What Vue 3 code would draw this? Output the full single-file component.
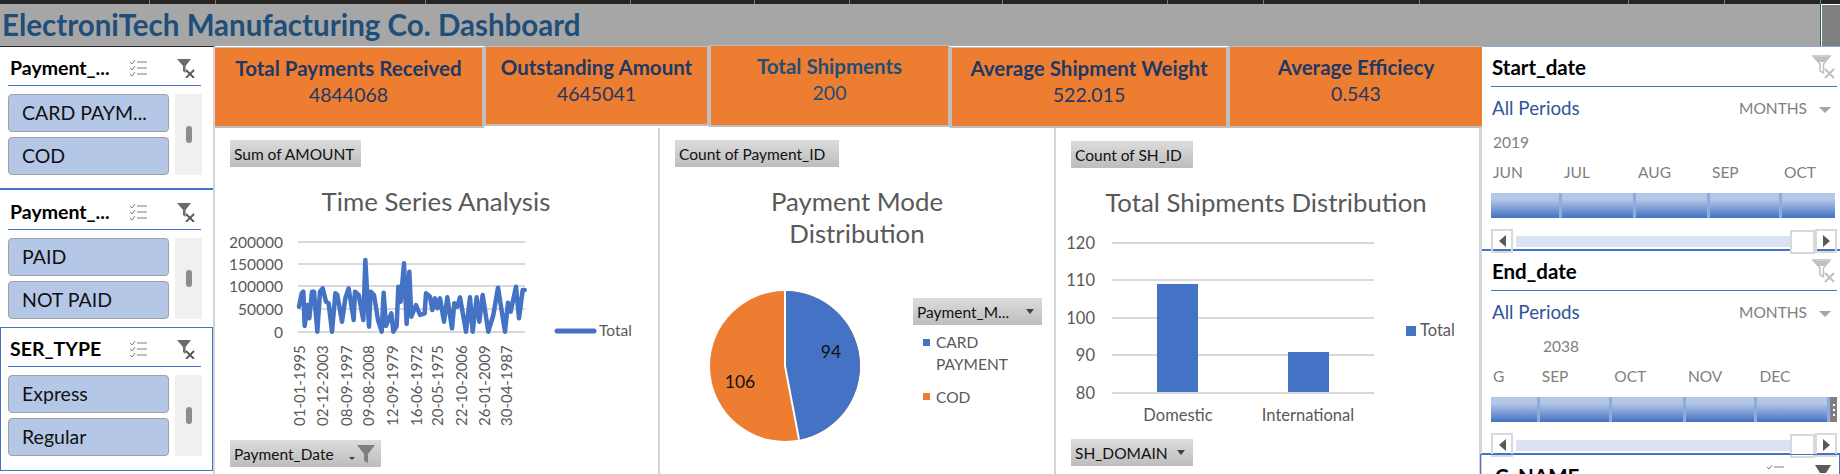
<template>
  <div class="sheet">
    <div class="ruler">
      <span v-for="x in rulerTicks" :key="x" class="tick" :style="{ left: x + 'px' }"></span>
    </div>
    <div class="banner">
      <h1>ElectroniTech Manufacturing Co. Dashboard</h1>
      <div class="selected-cell"></div>
    </div>

    <div class="main">
      <!-- left slicers -->
      <aside class="left-col">
        <section v-for="s in slicers" :key="s.cls" class="slicer" :class="s.cls">
          <header class="slicer-head">
            <span class="slicer-title">{{ s.title }}</span>
            <svg class="ico-list" viewBox="0 0 19 19">
              <g fill="none" stroke="#7f7f7f" stroke-width="1">
                <path d="M1 3l2 2 3-4M1 9l2 2 3-4M1 15l2 2 3-4" />
                <path d="M8 3h10M8 9h10M8 15h10" />
              </g>
            </svg>
            <svg class="ico-clear" viewBox="0 0 20 20">
              <path d="M1 1h14L9.5 8v7L7 13V8z" fill="#6b6b6b" />
              <path d="M10 12l8 8M18 12l-8 8" stroke="#555" stroke-width="1.8" fill="none" />
            </svg>
          </header>
          <div class="slicer-body">
            <div class="items">
              <div v-for="item in s.items" :key="item" class="item">{{ item }}</div>
            </div>
            <div class="track"><span class="thumb"></span></div>
          </div>
        </section>
      </aside>

      <div class="center-col">
        <div class="kpis">
          <div v-for="k in kpis" :key="k.label" class="kpi" :class="k.cls">
            <div class="kpi-label">{{ k.label }}</div>
            <div class="kpi-value">{{ k.value }}</div>
          </div>
        </div>

        <div class="charts">
          <!-- line chart -->
          <div class="panel panel-line">
            <div class="field-btn btn-amount">Sum of AMOUNT</div>
            <h2 class="chart-title">Time Series Analysis</h2>
            <svg class="plot plot-line" viewBox="230 232 425 200">
              <line v-for="y in [242, 264, 286, 309, 332]" :key="y" x1="298" x2="525" :y1="y" :y2="y" class="grid" />
              <text v-for="t in lineTicks" :key="t.label" x="283" :y="t.y + 5.5" text-anchor="end" class="axis">{{ t.label }}</text>
              <polyline :points="linePoints" class="series" />
              <text
                v-for="d in lineDates"
                :key="d.label"
                :transform="`translate(${d.x} 426) rotate(-90)`"
                class="axis axis-date"
              >{{ d.label }}</text>
              <line x1="557" x2="594" y1="331" y2="331" class="legend-line" />
              <text x="599" y="336" class="axis">Total</text>
            </svg>
            <div class="field-btn btn-date">
              Payment_Date
              <span class="mini-arrow"></span>
              <svg class="ico-funnel" viewBox="0 0 20 20"><path d="M1 1h18l-7 9v9l-4-2v-7z" fill="#7f7f7f" /></svg>
            </div>
          </div>

          <!-- pie chart -->
          <div class="panel panel-pie">
            <div class="field-btn btn-count">Count of Payment_ID</div>
            <h2 class="chart-title">Payment Mode<br />Distribution</h2>
            <svg class="plot plot-pie" viewBox="675 250 378 200">
              <circle cx="785" cy="366" r="75" fill="#ed7d31" />
              <path :d="blueSlice" fill="#4472c4" />
              <path :d="sliceEdges" stroke="#fff" stroke-width="2" fill="none" />
              <text x="831" y="358" text-anchor="middle" class="pie-label">94</text>
              <text x="740" y="388" text-anchor="middle" class="pie-label">106</text>
              <rect x="923" y="339" width="7" height="7" fill="#4472c4" />
              <text x="936" y="348" class="axis">CARD</text>
              <text x="936" y="370" class="axis">PAYMENT</text>
              <rect x="923" y="393" width="7" height="7" fill="#ed7d31" />
              <text x="936" y="403" class="axis">COD</text>
            </svg>
            <div class="field-btn btn-mode">Payment_M... <span class="arrow"></span></div>
          </div>

          <!-- bar chart -->
          <div class="panel panel-bar">
            <div class="field-btn btn-shid">Count of SH_ID</div>
            <h2 class="chart-title">Total Shipments Distribution</h2>
            <svg class="plot plot-bar" viewBox="1061 232 419 200">
              <g v-for="t in barTicks" :key="t.label">
                <line x1="1112" x2="1374" :y1="t.y" :y2="t.y" class="grid" />
                <text x="1095" :y="t.y + 5.5" text-anchor="end" class="axis axis-large">{{ t.label }}</text>
              </g>
              <rect x="1157" y="284" width="41" height="108" fill="#4472c4" />
              <rect x="1288" y="352" width="41" height="40" fill="#4472c4" />
              <text x="1178" y="421" text-anchor="middle" class="axis axis-large">Domestic</text>
              <text x="1308" y="421" text-anchor="middle" class="axis axis-large">International</text>
              <rect x="1406" y="326" width="10" height="10" fill="#4472c4" />
              <text x="1420" y="336" class="axis axis-large">Total</text>
            </svg>
            <div class="field-btn btn-domain">SH_DOMAIN <span class="arrow"></span></div>
          </div>
        </div>
      </div>

      <!-- right timeline slicers -->
      <aside class="right-col">
        <section v-for="c in timelines" :key="c.title" class="timeline">
          <header class="tl-head">
            <span class="tl-title">{{ c.title }}</span>
            <svg class="ico-clear-light" viewBox="0 0 24 24">
              <path d="M1 1h17l-6.5 8v9L8 16V9z" fill="none" stroke="#bfbfbf" stroke-width="1.5" />
              <path d="M2 2h15l-5 5H6z" fill="#bfbfbf" />
              <path d="M13 14l9 9M22 14l-9 9" stroke="#bfbfbf" stroke-width="2" fill="none" />
            </svg>
          </header>
          <div class="tl-range">
            <span class="all-periods">All Periods</span>
            <span class="months-pick">MONTHS <span class="arrow light"></span></span>
          </div>
          <div class="tl-year" :style="{ paddingLeft: c.yearPad + 'px' }">{{ c.year }}</div>
          <div class="tl-strip">
            <div v-for="m in c.months" :key="m.name" class="tl-month" :style="{ width: m.w + 'px' }">
              <span class="tl-name">{{ m.name }}</span>
              <span class="tl-seg"></span>
            </div>
            <div v-if="c.handle" class="tl-handle"><i></i><i></i><i></i></div>
          </div>
          <div class="tl-scroll">
            <span class="scroll-btn"><span class="tri left"></span></span>
            <span class="scroll-track"><span class="scroll-thumb"></span></span>
            <span class="scroll-btn"><span class="tri right"></span></span>
          </div>
        </section>
        <section class="tl-next">
          <span class="tl-title">C_NAME</span>
          <svg class="next-list" viewBox="0 0 19 10">
            <path d="M1 3l2 2 3-4M8 3h10" stroke="#7f7f7f" fill="none" />
          </svg>
          <svg class="next-funnel" viewBox="0 0 16 8"><path d="M0 0h16l-5 8H5z" fill="#595959" /></svg>
        </section>
      </aside>
    </div>
  </div>
</template>

<script setup>
const rulerTicks = [149, 215, 425, 630, 754, 849, 1002, 1167, 1263, 1419, 1628, 1724, 1820]

const slicers = [
  { title: 'Payment_...', cls: 's-one', items: ['CARD PAYM...', 'COD'] },
  { title: 'Payment_...', cls: 's-two', items: ['PAID', 'NOT PAID'] },
  { title: 'SER_TYPE', cls: 's-three', items: ['Express', 'Regular'] }
]

const kpis = [
  { label: 'Total Payments Received', value: '4844068', cls: 'k1' },
  { label: 'Outstanding Amount', value: '4645041', cls: 'k2' },
  { label: 'Total Shipments', value: '200', cls: 'k3' },
  { label: 'Average Shipment Weight', value: '522.015', cls: 'k4' },
  { label: 'Average Efficiecy', value: '0.543', cls: 'k5' }
]

const lineTicks = [
  { label: '200000', y: 242 },
  { label: '150000', y: 264 },
  { label: '100000', y: 286 },
  { label: '50000', y: 309 },
  { label: '0', y: 332 }
]

const lineDates = [
  ['01-01-1995', 305], ['02-12-2003', 328], ['08-09-1997', 352], ['09-08-2008', 374], ['12-09-1979', 398],
  ['16-06-1972', 422], ['20-05-1975', 443], ['22-10-2006', 467], ['26-01-2009', 490], ['30-04-1987', 512]
].map(([label, x]) => ({ label, x }))

// points read off the reference, as crop coordinates (3x, origin 220,220)
const raw = [
  [237, 260], [245, 220], [250, 215], [254, 318], [262, 255], [268, 295], [276, 215], [282, 215], [292, 335],
  [300, 215], [308, 205], [318, 245], [326, 250], [336, 335], [346, 220], [352, 225], [366, 305], [376, 235],
  [386, 205], [401, 300], [405, 215], [416, 225], [430, 300], [436, 120], [447, 320], [452, 215], [462, 225],
  [474, 300], [485, 335], [491, 218], [498, 318], [514, 280], [520, 335], [530, 318], [535, 200], [542, 245],
  [552, 130], [560, 312], [568, 155], [574, 290], [588, 255], [600, 285], [614, 280], [618, 220], [630, 230],
  [637, 270], [645, 235], [652, 265], [660, 235], [672, 305], [682, 232], [696, 325], [703, 250], [712, 260],
  [720, 232], [738, 335], [750, 232], [758, 335], [770, 232], [778, 305], [788, 225], [805, 335], [820, 285],
  [834, 203], [855, 335], [864, 248], [872, 275], [888, 200], [897, 295], [908, 210], [914, 210]
]
const linePoints = raw.map(([x, y]) => `${220 + x / 3},${220 + y / 3}`).join(' ')

// pie: 94 of 200, clockwise from the top
const angle = (94 / 200) * 2 * Math.PI
const endX = 785 + 75 * Math.sin(angle)
const endY = 366 - 75 * Math.cos(angle)
const blueSlice = `M785 366V291A75 75 0 0 1 ${endX} ${endY}Z`
const sliceEdges = `M785 291V366L${endX} ${endY}`

const barTicks = [
  { label: '120', y: 243 },
  { label: '110', y: 280 },
  { label: '100', y: 318 },
  { label: '90', y: 355 },
  { label: '80', y: 393 }
]

const timelines = [
  {
    title: 'Start_date',
    year: '2019',
    yearPad: 2,
    handle: false,
    months: [
      { name: 'JUN', w: 71 },
      { name: 'JUL', w: 74 },
      { name: 'AUG', w: 74 },
      { name: 'SEP', w: 72 },
      { name: 'OCT', w: 53 }
    ]
  },
  {
    title: 'End_date',
    year: '2038',
    yearPad: 52,
    handle: true,
    months: [
      { name: 'G', w: 49 },
      { name: 'SEP', w: 73 },
      { name: 'OCT', w: 74 },
      { name: 'NOV', w: 72 },
      { name: 'DEC', w: 73 }
    ]
  }
]
</script>

<style>
html, body {
  margin: 0;
  background: #fff;
  overflow: hidden;
}
</style>

<style scoped>
.sheet {
  width: 1840px;
  height: 474px;
  overflow: hidden;
  font-family: Lato, "Liberation Sans", sans-serif;
  color: #000;
}

.ruler {
  position: relative;
  height: 4px;
  background: #262626;
}

.tick {
  position: absolute;
  top: 0;
  width: 1px;
  height: 4px;
  background: #7f7f7f;
}

.banner {
  height: 42px;
  background: #a6a6a6;
  display: flex;
  justify-content: space-between;
}

.banner h1 {
  margin: 0;
  padding-left: 2px;
  font-size: 29.5px;
  line-height: 42px;
  font-weight: 700;
  color: #1f4e79;
}

.selected-cell {
  width: 19px;
  background: #7f7f7f;
  border-left: 1px solid #1e7145;
  box-shadow: inset 1px 1px 0 #fff;
}

.main {
  display: flex;
  height: 428px;
}

/* left slicers */
.left-col {
  width: 215px;
  flex: none;
  box-sizing: border-box;
  border-right: 2px solid #d4d4d4;
  border-top: 1px solid #262626;
}

.slicer {
  box-sizing: border-box;
  padding: 10px 0 0 8px;
  width: 213px;
}

.s-one {
  height: 143px;
  border-bottom: 2px solid #4472c4;
}

.s-two {
  height: 137px;
  padding-top: 11px;
}

.s-three {
  height: 144px;
  border: 1px solid #4472c4;
  padding: 10px 0 0 7px;
}

.slicer-head {
  display: flex;
  align-items: center;
  width: 193px;
  height: 29px;
  padding-left: 2px;
  box-sizing: border-box;
  border-bottom: 1px solid #4472c4;
}

.slicer-title {
  width: 119px;
  font-weight: 700;
  font-size: 19.5px;
  line-height: 22px;
  padding-bottom: 6px;
}

.ico-list {
  width: 19px;
  height: 19px;
  margin-bottom: 6px;
}

.ico-clear {
  width: 20px;
  height: 20px;
  margin: 0 0 6px 28px;
}

.slicer-body {
  display: flex;
  gap: 6px;
  margin-top: 8px;
}

.items {
  width: 161px;
  display: flex;
  flex-direction: column;
  gap: 5px;
}

.item {
  height: 38px;
  box-sizing: border-box;
  background: #b4c7e7;
  border: 1px solid #a0a0a0;
  border-radius: 4px;
  padding-left: 13px;
  font-size: 19.5px;
  line-height: 36px;
  color: #111;
}

.track {
  width: 27px;
  background: #f0f0f0;
  display: flex;
  align-items: center;
  justify-content: center;
}

.thumb {
  width: 6px;
  height: 17px;
  border-radius: 3px;
  background: #8c8c8c;
}

/* center */
.center-col {
  width: 1267px;
  flex: none;
}

.kpis {
  display: grid;
  grid-template-columns: 269px 225px 241px 278px 254px;
  height: 82px;
  align-items: start;
}

.kpi {
  box-sizing: border-box;
  background: #ed7d31;
  border: 2px solid #bfbfbf;
  border-top-width: 1px;
  text-align: center;
  color: #1f3864;
  padding-top: 9px;
}

.k1 { margin-top: 1px; height: 81px; border-left: 0; }
.k2 { height: 80px; }
.k3 { margin-top: -1px; height: 82px; color: #1f4e79; }
.k4 { margin-top: 1px; height: 81px; }
.k5 { height: 82px; border-right: 0; }

.kpi-label {
  font-size: 20.5px;
  line-height: 22px;
  font-weight: 700;
}

.kpi-value {
  margin-top: 6px;
  font-size: 19.5px;
  line-height: 20px;
}

.charts {
  display: grid;
  grid-template-columns: 445px 396px 426px;
  height: 346px;
}

.panel {
  position: relative;
  box-sizing: border-box;
  padding: 12px 0 0 15px;
  border-right: 2px solid #d4d4d4;
}

.panel-bar {
  padding-top: 13px;
  border-right-width: 3px;
}

.field-btn {
  height: 27px;
  box-sizing: border-box;
  padding-left: 4px;
  display: flex;
  align-items: center;
  font-size: 15.5px;
  color: #111;
  background: linear-gradient(#dcdcdc, #bdbdbd);
}

.btn-amount { width: 131px; }
.btn-count { width: 164px; }
.btn-shid { width: 122px; }
.btn-date { width: 151px; margin-top: 8px; position: relative; }
.btn-domain { width: 122px; margin-top: 7px; justify-content: space-between; padding-right: 8px; }

.btn-mode {
  position: absolute;
  left: 253px;
  top: 170px;
  width: 129px;
  justify-content: space-between;
  padding-right: 8px;
}

.chart-title {
  margin: 18px 0 0;
  font-size: 25.8px;
  line-height: 32px;
  font-weight: 400;
  color: #595959;
  text-align: center;
}

.panel-line .chart-title { width: 412px; }
.panel-pie .chart-title { width: 364px; }
.panel-bar .chart-title { width: 390px; }

.plot {
  display: block;
}

.plot-line {
  width: 425px;
  height: 200px;
  margin-top: 15px;
}

.plot-pie {
  width: 378px;
  height: 200px;
  margin-top: 1px;
}

.plot-bar {
  width: 419px;
  height: 200px;
  margin: 14px 0 0 -10px;
}

.grid {
  stroke: #d9d9d9;
  stroke-width: 2;
}

.axis {
  font-family: Lato, "Liberation Sans", sans-serif;
  font-size: 15.5px;
  fill: #595959;
}

.axis-large {
  font-size: 16.5px;
}

.axis-date {
  font-size: 15px;
}

.series {
  fill: none;
  stroke: #4472c4;
  stroke-width: 4.5;
  stroke-linejoin: round;
  stroke-linecap: round;
}

.legend-line {
  stroke: #4472c4;
  stroke-width: 5;
  stroke-linecap: round;
}

.pie-label {
  font-family: Lato, "Liberation Sans", sans-serif;
  font-size: 17.5px;
  fill: #111;
}

.arrow {
  width: 0;
  height: 0;
  border-left: 4px solid transparent;
  border-right: 4px solid transparent;
  border-top: 5px solid #404040;
}

.arrow.light {
  display: inline-block;
  margin-left: 8px;
  vertical-align: middle;
  border-left-width: 6px;
  border-right-width: 6px;
  border-top: 6px solid #a6a6a6;
}

.mini-arrow {
  position: absolute;
  left: 119px;
  top: 17px;
  border-left: 3px solid transparent;
  border-right: 3px solid transparent;
  border-top: 3px solid #404040;
}

.ico-funnel {
  position: absolute;
  left: 126px;
  top: 4px;
  width: 20px;
  height: 20px;
}

/* right timelines */
.right-col {
  width: 358px;
  flex: none;
}

.timeline {
  box-sizing: border-box;
  height: 205px;
  padding: 0 3px 0 9px;
  border-bottom: 2px solid #4472c4;
  border-top: 1px solid #8faadc;
}

.timeline + .timeline {
  height: 203px;
  border-top: 0;
  border-bottom: 1px solid #4472c4;
}

.tl-head {
  height: 39px;
  display: flex;
  justify-content: space-between;
  align-items: center;
  border-bottom: 1px solid #4472c4;
  margin-bottom: 1px;
}

.tl-title {
  font-weight: 700;
  font-size: 20.5px;
  padding-left: 1px;
}

.ico-clear-light {
  width: 24px;
  height: 24px;
  margin-right: 1px;
}

.tl-range {
  height: 42px;
  box-sizing: border-box;
  display: flex;
  justify-content: space-between;
  align-items: center;
  padding: 0 6px 3px 1px;
}

.all-periods {
  font-size: 18.8px;
  color: #2f5597;
}

.months-pick {
  font-size: 15.5px;
  color: #808080;
}

.tl-year {
  height: 24px;
  line-height: 24px;
  font-size: 15.5px;
  color: #808080;
}

.tl-strip {
  display: flex;
  margin-top: 9px;
}

.tl-month {
  display: flex;
  flex-direction: column;
}

.tl-name {
  height: 30px;
  line-height: 18px;
  padding-left: 2px;
  font-size: 15.5px;
  color: #808080;
}

.tl-seg {
  height: 25px;
  background: linear-gradient(#b4c7e7 25%, #4472c4);
  border-right: 3px solid #8faadc;
}

.tl-month:last-of-type .tl-seg {
  border-right: 0;
}

.tl-handle {
  align-self: flex-end;
  width: 7px;
  height: 25px;
  background: #7f7f7f;
  display: flex;
  flex-direction: column;
  align-items: center;
  justify-content: center;
  gap: 3px;
}

.tl-handle i {
  width: 2px;
  height: 2px;
  background: #fff;
}

.tl-scroll {
  display: flex;
  justify-content: space-between;
  align-items: center;
  height: 24px;
  margin-top: 11px;
}

.scroll-btn {
  width: 22px;
  height: 24px;
  box-sizing: border-box;
  border: 2px solid #d9d9d9;
  display: flex;
  align-items: center;
  justify-content: center;
}

.tri {
  width: 0;
  height: 0;
  border-top: 6px solid transparent;
  border-bottom: 6px solid transparent;
}

.tri.left { border-right: 7px solid #595959; }
.tri.right { border-left: 7px solid #595959; }

.scroll-track {
  position: relative;
  flex: 1;
  height: 11px;
  margin-left: 3px;
  background: #dae3f3;
}

.scroll-thumb {
  position: absolute;
  right: 0;
  top: -6px;
  width: 25px;
  height: 24px;
  box-sizing: border-box;
  background: #fff;
  border: 2px solid #d9d9d9;
}

.tl-next {
  position: relative;
  margin-left: -2px;
  height: 40px;
  box-sizing: border-box;
  border: 1px solid #4472c4;
  padding: 11px 0 0 13px;
  line-height: 20px;
}

.next-list {
  position: absolute;
  left: 285px;
  top: 9px;
  width: 19px;
  height: 10px;
}

.next-funnel {
  position: absolute;
  left: 334px;
  top: 10px;
  width: 16px;
  height: 8px;
}
</style>
